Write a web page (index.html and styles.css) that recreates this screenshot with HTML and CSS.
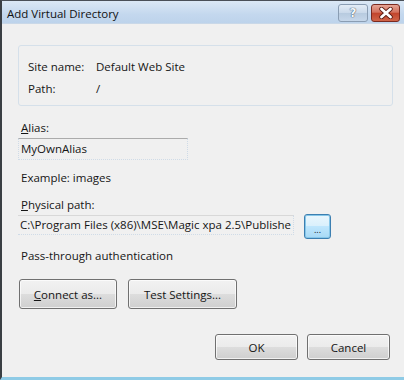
FILE: index.html
```html
<!DOCTYPE html>
<html lang="en">
<head>
    <meta charset="UTF-8">
    <title>Add Virtual Directory</title>
    <link rel="stylesheet" href="styles.css">
</head>
<body>
    <div class="window">
        <div class="titlebar">
            <span class="title">Add Virtual Directory</span>
            <div class="caption">
                <span class="cbtn help">?</span>
                <span class="cbtn close">
                    <svg width="14" height="12" viewBox="0 0 14 12">
                        <path d="M2.5 2 L11.5 10 M11.5 2 L2.5 10" stroke="#5a1a12" stroke-width="4.4" stroke-linecap="round"/>
                        <path d="M2.5 2 L11.5 10 M11.5 2 L2.5 10" stroke="#fff" stroke-width="2.8" stroke-linecap="round"/>
                    </svg>
                </span>
            </div>
        </div>
        <div class="client">
            <div class="group">
                <div class="info-row"><span class="key">Site name:</span><span>Default Web Site</span></div>
                <div class="info-row"><span class="key">Path:</span><span>/</span></div>
            </div>

            <div class="label"><u>A</u>lias:</div>
            <div class="field alias">MyOwnAlias</div>
            <div class="hint">Example: images</div>

            <div class="label path-label"><u>P</u>hysical path:</div>
            <div class="path-row">
                <div class="field path">C:\Program Files (x86)\MSE\Magic xpa 2.5\Publishe</div>
                <button class="btn browse">...</button>
            </div>
            <div class="hint auth">Pass-through authentication</div>

            <div class="btn-row">
                <button class="btn connect"><u>C</u>onnect as...</button>
                <button class="btn test">Test Settin<u>g</u>s...</button>
            </div>

            <div class="footer">
                <button class="btn ok">OK</button>
                <button class="btn cancel">Cancel</button>
            </div>
        </div>
    </div>
</body>
</html>
```

FILE: styles.css
```css
*{
    box-sizing: border-box;
}
body{
    margin: 0;
    width: 404px;
    height: 380px;
    overflow: hidden;
    background-color: #f0f0f0;
    font-family: "Open Sans", "Noto Sans", sans-serif;
    font-size: 11.5px;
    color: #151515;
}
div.window{
    height: 380px;
    display: flex;
    flex-direction: column;
    border-left: 2px solid #3a3f44;
    border-top: 1px solid #4a5058;
    border-bottom: 3px solid #8fcbe6;
}
div.titlebar{
    height: 23px;
    display: flex;
    align-items: center;
    justify-content: space-between;
    padding: 0 4px 0 5px;
    background: linear-gradient(#dbe8f5, #c4d8ee 60%, #bdd3eb);
    border-bottom: 1px solid #c9d8e8;
}
span.title{
    font-size: 11.5px;
    color: #111;
    margin-top: 2px;
}
div.caption{
    display: flex;
    gap: 3px;
    margin-top: 1px;
}
span.cbtn{
    height: 18px;
    display: flex;
    align-items: center;
    justify-content: center;
    border-radius: 3px;
}
span.help{
    width: 30px;
    border: 1px solid #8a9db3;
    background: linear-gradient(#e3ecf6, #c9d8ea 50%, #b7cadf 51%, #c6d7ea);
    color: #f4f7fb;
    font-family: "DejaVu Sans", sans-serif;
    font-weight: bold;
    font-size: 12px;
    text-shadow: 0 0 1px #33485e, 0 0 1px #33485e;
}
span.close{
    width: 29px;
    border: 1px solid #7a2a20;
    background: linear-gradient(#e6a495, #d3715d 45%, #c2452d 52%, #d06448);
}
div.client{
    flex: 1;
    display: flex;
    flex-direction: column;
    padding: 21px 13px 0 16px;
}
div.group{
    width: 375px;
    height: 61px;
    border: 1px solid #d5e0ea;
    border-radius: 3px;
    padding: 9px 0 0 9px;
}
div.info-row{
    display: flex;
    height: 22px;
    align-items: center;
}
span.key{
    width: 68px;
}
div.label{
    margin: 13px 0 2px 3px;
    height: 17px;
    line-height: 17px;
}
div.path-label{
    margin-top: 10px;
}
div.field{
    height: 22px;
    line-height: 20px;
    padding-left: 2px;
    border: 1px dotted #cfdbe7;
    border-top: 1px solid #ababab;
}
div.alias{
    width: 170px;
}
div.hint{
    margin: 9px 0 0 3px;
    height: 17px;
    line-height: 17px;
}
div.path-row{
    display: flex;
    align-items: flex-start;
}
div.path{
    width: 276px;
    height: 20px;
    line-height: 18px;
    border-top: 1px solid #d8d8d8;
    border-left: none;
    white-space: nowrap;
    overflow: hidden;
}
.btn{
    font: inherit;
    color: #151515;
    border: 1px solid #707070;
    border-radius: 3px;
    background: linear-gradient(#f2f2f2, #ebebeb 49%, #dddddd 50%, #cfcfcf);
    box-shadow: inset 0 0 0 1px rgba(255, 255, 255, 0.7);
    padding: 0;
}
button.browse{
    width: 27px;
    height: 25px;
    margin-left: 10px;
    margin-top: -1px;
    border: 1px solid #3c7fb1;
    background: linear-gradient(#eaf6fd, #d9f0fc 49%, #bee6fd 50%, #a7d9f5);
    box-shadow: inset 0 0 0 1px #86c6e8;
    font-size: 9px;
    line-height: 10px;
    padding-top: 6px;
}
div.auth{
    margin-top: 8px;
}
div.btn-row{
    display: flex;
    gap: 11px;
    margin: 15px 0 0 1px;
}
div.btn-row .btn{
    height: 30px;
}
button.connect{
    width: 98px;
}
button.test{
    width: 109px;
}
div.footer{
    display: flex;
    justify-content: flex-end;
    gap: 9px;
    margin-top: 25px;
    padding-right: 1px;
}
div.footer .btn{
    width: 83px;
    height: 26px;
}
```
